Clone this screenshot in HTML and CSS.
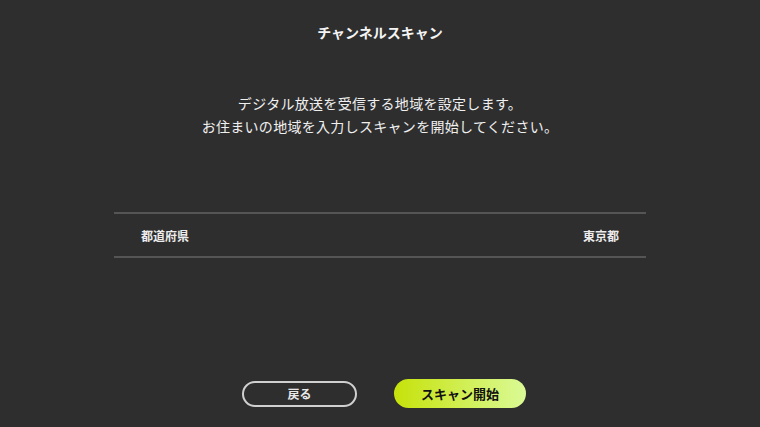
FILE: index.html
```html
<!DOCTYPE html>
<html lang="ja">
<head>
<meta charset="UTF-8">
<meta name="viewport" content="width=device-width, initial-scale=1.0">
<title>チャンネルスキャン</title>
<link rel="stylesheet" href="styles.css">
</head>
<body>
    <div class="screen">
        <h1 class="title">チャンネルスキャン</h1>
        <p class="message">デジタル放送を受信する地域を設定します。<br>お住まいの地域を入力しスキャンを開始してください。</p>

        <div class="setting-row">
            <span class="setting-label">都道府県</span>
            <span class="setting-value">東京都</span>
        </div>

        <div class="actions">
            <button class="btn btn-back">戻る</button>
            <button class="btn btn-start">スキャン開始</button>
        </div>
    </div>
</body>
</html>
```

FILE: styles.css
```css
body {
    margin: 0;
    padding: 0;
    background-color: #2e2e2e;
    font-family: "Noto Sans CJK JP", "Noto Sans", sans-serif;
    color: #f0f0f0;
}

.screen {
    height: 427px;
    display: flex;
    flex-direction: column;
    align-items: center;
}

.title {
    margin: 22px 0 0;
    font-size: 14px;
    line-height: 20px;
    font-weight: bold;
    color: #f4f4f4;
}

.message {
    margin: 50px 0 0;
    font-size: 14px;
    line-height: 23px;
    letter-spacing: 0.3px;
    text-align: center;
}

.setting-row {
    margin-top: 74px;
    width: 532px;
    box-sizing: border-box;
    height: 46px;
    padding: 0 27px;
    border-top: 2px solid #555;
    border-bottom: 2px solid #555;
    display: flex;
    justify-content: space-between;
    align-items: center;
    font-size: 12px;
    font-weight: bold;
    color: #ececec;
}

.actions {
    margin-top: 121px;
    padding-left: 8px;
    display: flex;
    align-items: center;
    gap: 37px;
}

.btn {
    font-family: inherit;
    font-size: 12px;
    font-weight: bold;
    border-radius: 999px;
    cursor: pointer;
    padding: 0;
}

.btn-back {
    width: 115px;
    height: 26px;
    background: transparent;
    border: 2px solid #d0d0d0;
    color: #e8e8e8;
}

.btn-start {
    width: 132px;
    height: 29px;
    border: none;
    background: linear-gradient(to right, #c6e20a, #dafa96);
    color: #111;
    font-size: 13px;
}
```
